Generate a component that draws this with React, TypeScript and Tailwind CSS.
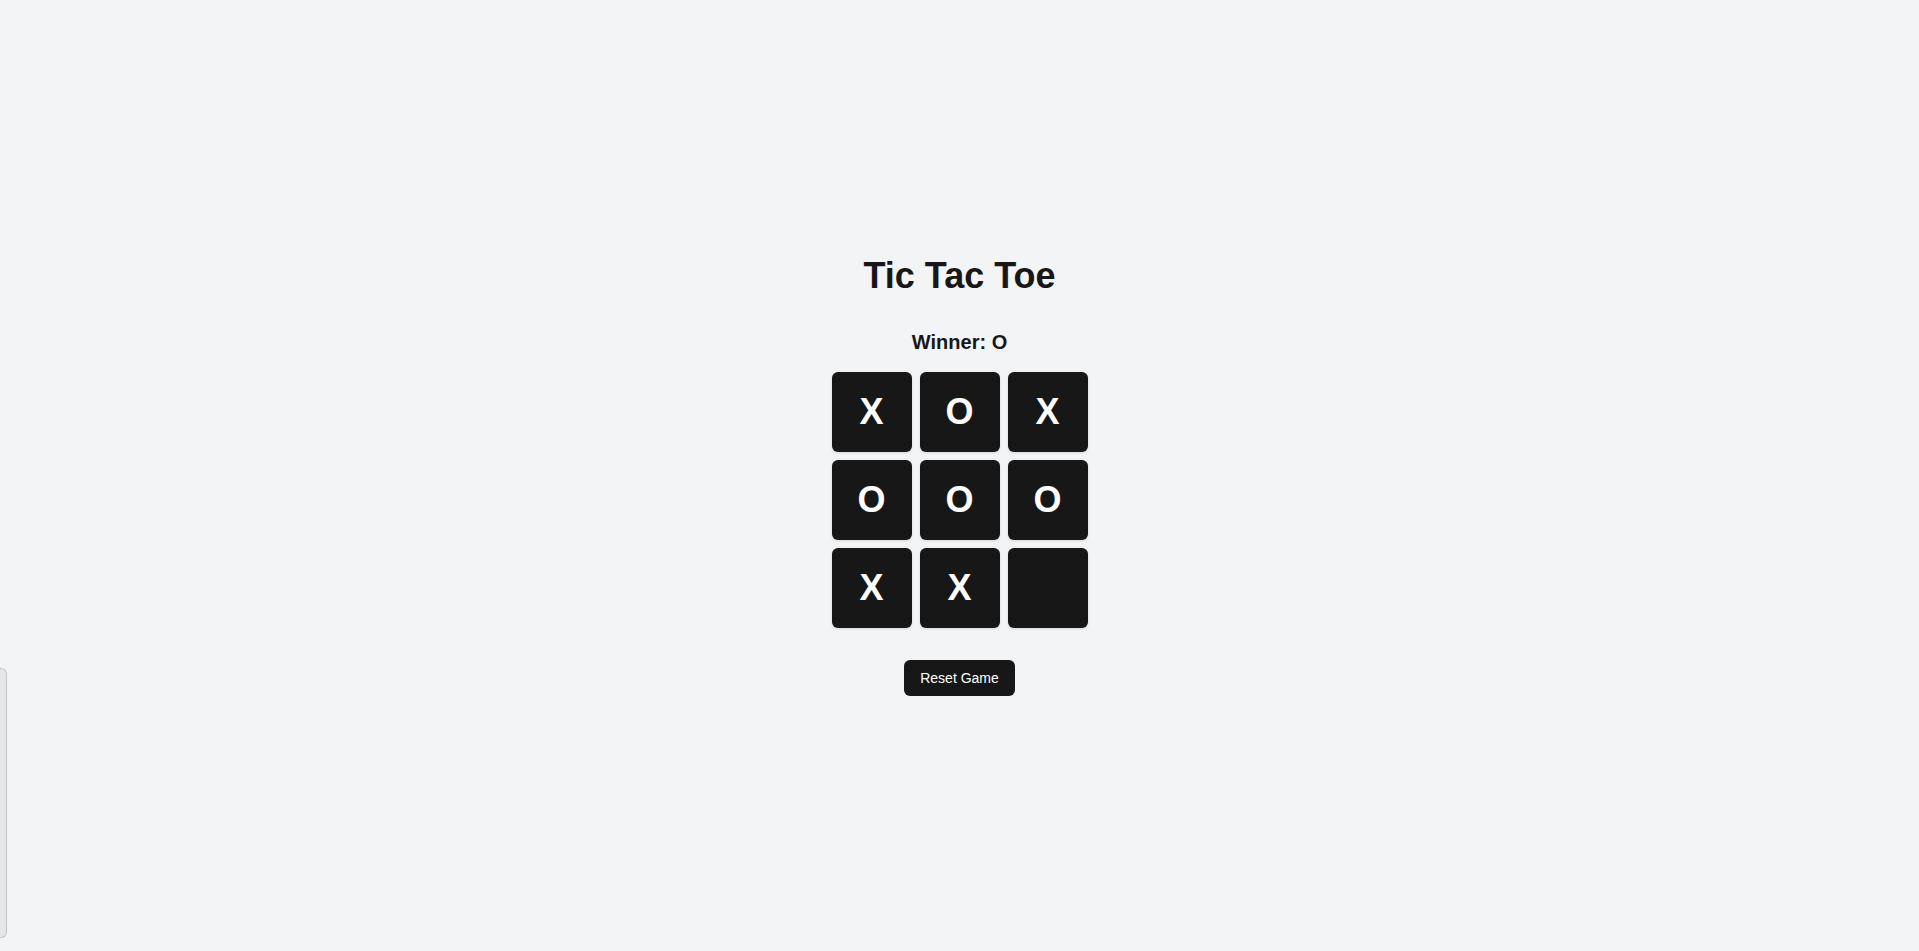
import { useState } from 'react';

type Cell = 'X' | 'O' | null;

const START: Cell[] = ['X', 'O', 'X', 'O', 'O', 'O', 'X', 'X', null];

const LINES = [
  [0, 1, 2], [3, 4, 5], [6, 7, 8],
  [0, 3, 6], [1, 4, 7], [2, 5, 8],
  [0, 4, 8], [2, 4, 6],
];

function getWinner(board: Cell[]): Cell {
  for (const [a, b, c] of LINES) {
    if (board[a] && board[a] === board[b] && board[a] === board[c]) return board[a];
  }
  return null;
}

export default function App() {
  const [board, setBoard] = useState<Cell[]>(START);
  const [xNext, setXNext] = useState(true);
  const winner = getWinner(board);

  const handleClick = (i: number) => {
    if (board[i] || winner) return;
    const next = board.slice();
    next[i] = xNext ? 'X' : 'O';
    setBoard(next);
    setXNext(!xNext);
  };

  const resetGame = () => {
    setBoard(Array(9).fill(null));
    setXNext(true);
  };

  return (
    <div className="min-h-screen bg-[#f3f4f6] flex flex-col items-center justify-center font-['Liberation_Sans',Arial,sans-serif] text-[#171717]">
      <h1 className="text-4xl font-bold mb-8">Tic Tac Toe</h1>
      <div className="text-xl font-bold leading-7 mb-4">
        {winner ? `Winner: ${winner}` : `Next player: ${xNext ? 'X' : 'O'}`}
      </div>
      <div className="grid grid-cols-3 gap-2">
        {board.map((cell, i) => (
          <button
            key={i}
            onClick={() => handleClick(i)}
            className="w-20 h-20 rounded-md bg-[#171717] text-white text-4xl font-bold flex items-center justify-center shadow-sm"
          >
            {cell}
          </button>
        ))}
      </div>
      <button
        onClick={resetGame}
        className="mt-8 px-4 py-2 text-sm leading-5 rounded-md bg-[#171717] text-white"
      >
        Reset Game
      </button>
      <div className="fixed left-0 top-[668px] h-[270px] w-[7px] rounded-r-md border border-l-0 border-[#c4c4c4] bg-[#e5e7eb]" />
    </div>
  );
}
